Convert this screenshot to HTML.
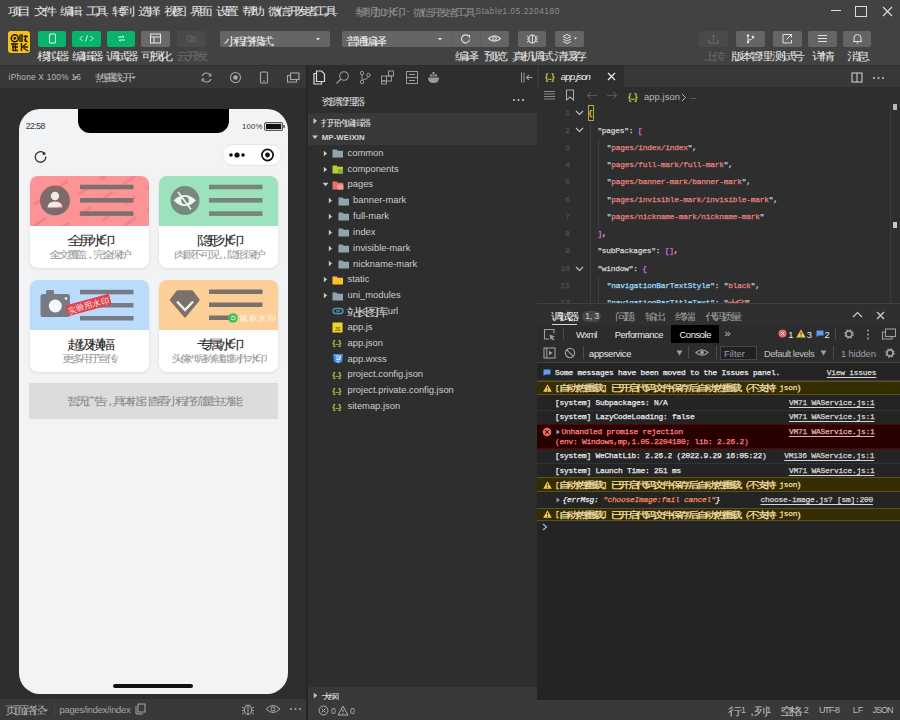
<!DOCTYPE html>
<html><head><meta charset="utf-8">
<style>
*{box-sizing:border-box;margin:0;padding:0}
html,body{width:900px;height:720px;overflow:hidden;background:#3a3a3a;font-family:"Liberation Sans",sans-serif;position:relative}
.a{position:absolute}
.t{position:absolute;white-space:nowrap;line-height:1}
.mono{font-family:"Liberation Mono",monospace;-webkit-text-stroke:.25px}
.c,.cm{font-family:"Liberation Sans",sans-serif;display:inline-block;width:.847em;text-align:center;font-style:normal;font-weight:normal;font-size:1.18em;letter-spacing:0;line-height:0;position:relative;top:.17em;transform:scaleX(1.28)}
.cm{width:.929em}
</style></head><body>
<div class="a" style="left:0px;top:0px;width:900px;height:65px;background:#424242;"></div>
<div class="a" style="left:0px;top:64.6px;width:900px;height:1px;background:#2e2e2e;"></div>
<div class="t " style="left:9.00px;top:6.63px;font-size:9.3px;color:#e4e4e4;;"><i class="c">项</i><i class="c">目</i></div>
<div class="t " style="left:35.00px;top:6.63px;font-size:9.3px;color:#e4e4e4;;"><i class="c">文</i><i class="c">件</i></div>
<div class="t " style="left:61.00px;top:6.63px;font-size:9.3px;color:#e4e4e4;;"><i class="c">编</i><i class="c">辑</i></div>
<div class="t " style="left:87.00px;top:6.63px;font-size:9.3px;color:#e4e4e4;;"><i class="c">工</i><i class="c">具</i></div>
<div class="t " style="left:113.00px;top:6.63px;font-size:9.3px;color:#e4e4e4;;"><i class="c">转</i><i class="c">到</i></div>
<div class="t " style="left:139.00px;top:6.63px;font-size:9.3px;color:#e4e4e4;;"><i class="c">选</i><i class="c">择</i></div>
<div class="t " style="left:165.00px;top:6.63px;font-size:9.3px;color:#e4e4e4;;"><i class="c">视</i><i class="c">图</i></div>
<div class="t " style="left:191.00px;top:6.63px;font-size:9.3px;color:#e4e4e4;;"><i class="c">界</i><i class="c">面</i></div>
<div class="t " style="left:217.00px;top:6.63px;font-size:9.3px;color:#e4e4e4;;"><i class="c">设</i><i class="c">置</i></div>
<div class="t " style="left:243.00px;top:6.63px;font-size:9.3px;color:#e4e4e4;;"><i class="c">帮</i><i class="c">助</i></div>
<div class="t " style="left:269.00px;top:6.63px;font-size:9.3px;color:#e4e4e4;;"><i class="c">微</i><i class="c">信</i><i class="c">开</i><i class="c">发</i><i class="c">者</i><i class="c">工</i><i class="c">具</i></div>
<div class="t " style="left:356.00px;top:6.71px;font-size:9.2px;color:#8e8e8e;;"><i class="c">黎</i><i class="c">明</i><i class="c">加</i><i class="c">水</i><i class="c">印</i></div>
<div class="t " style="left:406.50px;top:6.88px;font-size:9px;color:#8e8e8e;;">-</div>
<div class="t " style="left:413.50px;top:7.22px;font-size:8.6px;color:#8e8e8e;;"><i class="c">微</i><i class="c">信</i><i class="c">开</i><i class="c">发</i><i class="c">者</i><i class="c">工</i><i class="c">具</i></div>
<div class="t " style="left:475.50px;top:7.47px;font-size:8.3px;color:#8e8e8e;;letter-spacing:0.600px;">Stable</div>
<div class="t " style="left:502.50px;top:7.47px;font-size:8.3px;color:#8e8e8e;;letter-spacing:0.545px;">1.05.2204180</div>
<div class="a" style="left:831px;top:10px;width:10px;height:1px;background:#dcdcdc;"></div>
<div class="a" style="left:855px;top:6px;width:12px;height:11px;background:transparent;border:1.2px solid #dcdcdc"></div>
<svg class="a" style="left:882px;top:6px;" width="11" height="11" viewBox="0 0 11 11"><path d="M1 1L10 10M10 1L1 10" stroke="#dcdcdc" stroke-width="1.2"/></svg>
<div class="a" style="left:8px;top:31px;width:22px;height:22px;background:#f4c01e;border-radius:3px"></div>
<svg class="a" style="left:8px;top:31px;" width="22" height="22" viewBox="0 0 22 22"><circle cx="6.8" cy="7.2" r="3.5" fill="none" stroke="#2a2000" stroke-width="1.6"/><path d="M6.8 5.4L8.6 7.2L6.8 9L5 7.2Z" fill="#2a2000"/><path d="M12 3.5V11M14 3V11M15.5 5.5H20M17.5 4V11M16 8.5L19.5 11" fill="none" stroke="#2a2000" stroke-width="1.5"/><path d="M3 13H10M5 12V20M4 16H10M7.5 13.5V20M4.5 19.5H10" fill="none" stroke="#2a2000" stroke-width="1.5"/><path d="M13.5 12V20M13 16H20M18.5 12.5L15 15.5M15.5 17L20 20" fill="none" stroke="#2a2000" stroke-width="1.5"/></svg>
<div class="a" style="left:37.5px;top:31.3px;width:28.8px;height:15.4px;background:#07b56a;border-radius:2px"></div>
<div class="t" style="left:31.90px;top:51.63px;width:40px;text-align:center;font-size:9.3px;color:#e0e0e0;"><i class="c">模</i><i class="c">拟</i><i class="c">器</i></div>
<div class="a" style="left:72.2px;top:31.3px;width:28.8px;height:15.4px;background:#07b56a;border-radius:2px"></div>
<div class="t" style="left:66.60px;top:51.63px;width:40px;text-align:center;font-size:9.3px;color:#e0e0e0;"><i class="c">编</i><i class="c">辑</i><i class="c">器</i></div>
<div class="a" style="left:106.6px;top:31.3px;width:28.8px;height:15.4px;background:#07b56a;border-radius:2px"></div>
<div class="t" style="left:101.00px;top:51.63px;width:40px;text-align:center;font-size:9.3px;color:#e0e0e0;"><i class="c">调</i><i class="c">试</i><i class="c">器</i></div>
<div class="a" style="left:141.3px;top:31.3px;width:28.8px;height:15.4px;background:#6a6a6a;border-radius:2px"></div>
<div class="t" style="left:135.70px;top:51.63px;width:40px;text-align:center;font-size:9.3px;color:#e0e0e0;"><i class="c">可</i><i class="c">视</i><i class="c">化</i></div>
<div class="a" style="left:177px;top:31.3px;width:28.8px;height:15.4px;background:#4a4a4a;border-radius:2px"></div>
<div class="t" style="left:171.40px;top:51.63px;width:40px;text-align:center;font-size:9.3px;color:#6a6a6a;"><i class="c">云</i><i class="c">开</i><i class="c">发</i></div>
<svg class="a" style="left:37.5px;top:31.3px;" width="29" height="15" viewBox="0 0 29 15"><rect x="11.5" y="3" width="6" height="9" rx="1" fill="none" stroke="#e8f5ec" stroke-width="1.1"/></svg>
<svg class="a" style="left:72.2px;top:31.3px;" width="29" height="15" viewBox="0 0 29 15"><path d="M10.5 5L8 7.5L10.5 10M18.5 5L21 7.5L18.5 10M15.5 4.5L13.5 10.5" fill="none" stroke="#e8f5ec" stroke-width="1"/></svg>
<svg class="a" style="left:106.6px;top:31.3px;" width="29" height="15" viewBox="0 0 29 15"><path d="M11 6H17M15.5 4.5L17 6M18 9H12M13.5 10.5L12 9" fill="none" stroke="#e8f5ec" stroke-width="1"/></svg>
<svg class="a" style="left:141.3px;top:31.3px;" width="29" height="15" viewBox="0 0 29 15"><rect x="9.5" y="3" width="10" height="9" fill="none" stroke="#e6e6e6" stroke-width="1"/><path d="M9.5 6H19.5M13 6V12" stroke="#e6e6e6" stroke-width="1"/></svg>
<svg class="a" style="left:177px;top:31.3px;" width="29" height="15" viewBox="0 0 29 15"><circle cx="13" cy="7.5" r="3" fill="none" stroke="#666" stroke-width="1"/><circle cx="16.5" cy="8.5" r="2.5" fill="none" stroke="#666" stroke-width="1"/></svg>
<div class="a" style="left:220px;top:31.3px;width:109.5px;height:15.4px;background:#656565;border-radius:2px"></div>
<div class="t " style="left:224.50px;top:36.30px;font-size:9.1px;color:#e6e6e6;;"><i class="c">小</i><i class="c">程</i><i class="c">序</i><i class="c">模</i><i class="c">式</i></div>
<svg class="a" style="left:315px;top:36px;" width="6" height="6" viewBox="0 0 6 6"><path d="M1 2L5 2L3 4.5Z" fill="#e6e6e6"/></svg>
<div class="a" style="left:342px;top:31.3px;width:167px;height:15.4px;background:#656565;border-radius:2px"></div>
<div class="a" style="left:451px;top:31.3px;width:1px;height:15.4px;background:#5e5e5e;"></div>
<div class="a" style="left:480px;top:31.3px;width:1px;height:15.4px;background:#5e5e5e;"></div>
<div class="t " style="left:347.00px;top:36.30px;font-size:9.1px;color:#e6e6e6;;"><i class="c">普</i><i class="c">通</i><i class="c">编</i><i class="c">译</i></div>
<svg class="a" style="left:437px;top:36px;" width="6" height="6" viewBox="0 0 6 6"><path d="M1 2L5 2L3 4.5Z" fill="#e6e6e6"/></svg>
<svg class="a" style="left:451px;top:31.3px;" width="29" height="15" viewBox="0 0 29 15"><path d="M17.5 5.2A4 4 0 1 0 18.5 8.5" fill="none" stroke="#e0e0e0" stroke-width="1.1"/><path d="M16 4.5L18.5 4.5L18.5 7" fill="none" stroke="#e0e0e0" stroke-width="1.1"/></svg>
<svg class="a" style="left:480px;top:31.3px;" width="29" height="15" viewBox="0 0 29 15"><path d="M8.5 7.5Q14.5 2 20.5 7.5Q14.5 13 8.5 7.5Z" fill="none" stroke="#e0e0e0" stroke-width="1.1"/><circle cx="14.5" cy="7.5" r="1.8" fill="none" stroke="#e0e0e0" stroke-width="1.1"/></svg>
<div class="t" style="left:450.50px;top:51.63px;width:30px;text-align:center;font-size:9.3px;color:#e0e0e0;"><i class="c">编</i><i class="c">译</i></div>
<div class="t" style="left:479.50px;top:51.63px;width:30px;text-align:center;font-size:9.3px;color:#e0e0e0;"><i class="c">预</i><i class="c">览</i></div>
<div class="a" style="left:517.5px;top:31.3px;width:28.8px;height:15.4px;background:#656565;border-radius:2px"></div>
<svg class="a" style="left:517.5px;top:31.3px;" width="29" height="15" viewBox="0 0 29 15"><ellipse cx="14.4" cy="8" rx="3.5" ry="4" fill="none" stroke="#e0e0e0" stroke-width="1.1"/><path d="M9 5L11 6.5M19.8 5L17.8 6.5M9 8H11M17.8 8H19.8M9 11L11 10M19.8 11L17.8 10M14.4 4V12" stroke="#e0e0e0" stroke-width="1"/></svg>
<div class="t" style="left:509.90px;top:51.63px;width:44px;text-align:center;font-size:9.3px;color:#e0e0e0;"><i class="c">真</i><i class="c">机</i><i class="c">调</i><i class="c">试</i></div>
<div class="a" style="left:555px;top:31.3px;width:28.8px;height:15.4px;background:#656565;border-radius:2px"></div>
<svg class="a" style="left:555px;top:31.3px;" width="29" height="15" viewBox="0 0 29 15"><path d="M8 5.5L12 3.5L16 5.5L12 7.5Z M8 8L12 10L16 8 M8 10.5L12 12.5L16 10.5" fill="none" stroke="#e0e0e0" stroke-width="1"/><path d="M19 6.5L22 6.5L20.5 8.5Z" fill="#e0e0e0"/></svg>
<div class="t" style="left:549.40px;top:51.63px;width:40px;text-align:center;font-size:9.3px;color:#e0e0e0;"><i class="c">清</i><i class="c">缓</i><i class="c">存</i></div>
<div class="a" style="left:698.8px;top:31.3px;width:28.8px;height:15.4px;background:#4a4a4a;border-radius:2px"></div>
<div class="t" style="left:688.20px;top:51.63px;width:50px;text-align:center;font-size:9.3px;color:#666;"><i class="c">上</i><i class="c">传</i></div>
<div class="a" style="left:736px;top:31.3px;width:28.8px;height:15.4px;background:#656565;border-radius:2px"></div>
<div class="t" style="left:725.40px;top:51.63px;width:50px;text-align:center;font-size:9.3px;color:#e0e0e0;"><i class="c">版</i><i class="c">本</i><i class="c">管</i><i class="c">理</i></div>
<div class="a" style="left:773px;top:31.3px;width:28.8px;height:15.4px;background:#656565;border-radius:2px"></div>
<div class="t" style="left:762.40px;top:51.63px;width:50px;text-align:center;font-size:9.3px;color:#e0e0e0;"><i class="c">测</i><i class="c">试</i><i class="c">号</i></div>
<div class="a" style="left:807.8px;top:31.3px;width:28.8px;height:15.4px;background:#656565;border-radius:2px"></div>
<div class="t" style="left:797.20px;top:51.63px;width:50px;text-align:center;font-size:9.3px;color:#e0e0e0;"><i class="c">详</i><i class="c">情</i></div>
<div class="a" style="left:842.5px;top:31.3px;width:28.8px;height:15.4px;background:#656565;border-radius:2px"></div>
<div class="t" style="left:831.90px;top:51.63px;width:50px;text-align:center;font-size:9.3px;color:#e0e0e0;"><i class="c">消</i><i class="c">息</i></div>
<svg class="a" style="left:698.8px;top:31.3px;" width="29" height="15" viewBox="0 0 29 15"><path d="M10 9V12H19V9M14.5 10V4M12 6.5L14.5 4L17 6.5" fill="none" stroke="#6a6a6a" stroke-width="1"/></svg>
<svg class="a" style="left:736px;top:31.3px;" width="29" height="15" viewBox="0 0 29 15"><circle cx="12" cy="4.5" r="1.3" fill="#e0e0e0"/><circle cx="12" cy="11" r="1.3" fill="#e0e0e0"/><circle cx="17" cy="6" r="1.3" fill="#e0e0e0"/><path d="M12 5V10.5M12 9Q17 9 17 6" fill="none" stroke="#e0e0e0" stroke-width="1"/></svg>
<svg class="a" style="left:773px;top:31.3px;" width="29" height="15" viewBox="0 0 29 15"><path d="M16 3.5H10V12H18.5V9M13.5 8.5L18.5 3.5M15.5 3.5H18.5V6.5" fill="none" stroke="#e0e0e0" stroke-width="1"/></svg>
<svg class="a" style="left:807.8px;top:31.3px;" width="29" height="15" viewBox="0 0 29 15"><path d="M10 4.5H19M10 7.5H19M10 10.5H19" stroke="#e0e0e0" stroke-width="1.1"/></svg>
<svg class="a" style="left:842.5px;top:31.3px;" width="29" height="15" viewBox="0 0 29 15"><path d="M11 10.5V7Q11 3.5 14.5 3.5Q18 3.5 18 7V10.5H19H10M13.5 12H15.5" fill="none" stroke="#e0e0e0" stroke-width="1"/></svg>
<div class="a" style="left:0px;top:65.5px;width:306px;height:22.5px;background:#383838;"></div>
<div class="a" style="left:0px;top:88px;width:306px;height:611px;background:#2e2e2e;"></div>
<div class="a" style="left:0px;top:699px;width:306px;height:21px;background:#393939;"></div>
<div class="t " style="left:8.60px;top:73.47px;font-size:8.3px;color:#b8b8b8;;letter-spacing:0.233px;">iPhone X 100% 16</div>
<svg class="a" style="left:73px;top:75px;" width="6" height="6" viewBox="0 0 6 6"><path d="M0.5 1.5L5 1.5L2.75 4Z" fill="#b8b8b8"/></svg>
<div class="t " style="left:96.00px;top:73.64px;font-size:8.1px;color:#b8b8b8;;"><i class="c">热</i><i class="c">重</i><i class="c">载</i> <i class="c">开</i></div>
<svg class="a" style="left:131px;top:75px;" width="6" height="6" viewBox="0 0 6 6"><path d="M0.5 1.5L5 1.5L2.75 4Z" fill="#b8b8b8"/></svg>
<svg class="a" style="left:200px;top:71px;" width="13" height="13" viewBox="0 0 13 13"><path d="M10.5 4.5A4.5 4.5 0 0 0 2.2 5M2.5 8.5A4.5 4.5 0 0 0 10.8 8" fill="none" stroke="#a8a8a8" stroke-width="1.1"/><path d="M10.8 2.5V5H8.5M2.2 10.5V8H4.5" fill="none" stroke="#a8a8a8" stroke-width="1.1"/></svg>
<svg class="a" style="left:229px;top:71px;" width="13" height="13" viewBox="0 0 13 13"><circle cx="6.5" cy="6.5" r="5" fill="none" stroke="#a8a8a8" stroke-width="1.1"/><circle cx="6.5" cy="6.5" r="2.3" fill="#a8a8a8"/></svg>
<svg class="a" style="left:258px;top:71px;" width="12" height="13" viewBox="0 0 12 13"><rect x="2.5" y="1" width="7" height="11" rx="1" fill="none" stroke="#a8a8a8" stroke-width="1.1"/><path d="M5 10H7" stroke="#a8a8a8"/></svg>
<svg class="a" style="left:286px;top:71px;" width="14" height="13" viewBox="0 0 14 13"><rect x="4.5" y="2" width="8.5" height="6.5" fill="none" stroke="#a8a8a8" stroke-width="1.1"/><path d="M4.5 4.5H1.5V11H10.5V8.5" fill="none" stroke="#a8a8a8" stroke-width="1.1"/></svg>
<div class="a" style="left:19px;top:109px;width:269px;height:585px;background:#f2f3f5;border-radius:21px"></div>
<div class="a" style="left:78px;top:109px;width:151px;height:23.5px;background:#000;border-radius:0 0 12px 12px"></div>
<div class="t " style="left:25.70px;top:122.22px;font-size:8.6px;color:#333;;letter-spacing:-0.500px;">22:58</div>
<div class="t " style="left:242.00px;top:123.40px;font-size:7.8px;color:#333;;letter-spacing:0.167px;">100%</div>
<svg class="a" style="left:264px;top:122px;" width="22" height="9" viewBox="0 0 22 9"><rect x="0.6" y="0.6" width="18" height="7.8" rx="1.5" fill="none" stroke="#555" stroke-width="1.1"/><rect x="2" y="2" width="15.2" height="5" fill="#111"/><rect x="19.3" y="3" width="1.5" height="3" fill="#555"/></svg>
<svg class="a" style="left:33px;top:149px;" width="15" height="15" viewBox="0 0 15 15"><path d="M10.8 3.8A5.3 5.3 0 1 0 12.8 7.5" fill="none" stroke="#333" stroke-width="1.3"/><circle cx="11" cy="4.5" r="1.5" fill="#333"/></svg>
<div class="a" style="left:222px;top:144px;width:60px;height:22px;background:#fdfdfd;border-radius:11px;border:0.6px solid #e6e6e6"></div>
<svg class="a" style="left:222px;top:144px;" width="60" height="22" viewBox="0 0 60 22"><circle cx="9" cy="11" r="1.8" fill="#111"/><circle cx="15" cy="11" r="2.6" fill="#111"/><circle cx="21" cy="11" r="1.8" fill="#111"/><circle cx="45.5" cy="11" r="5.6" fill="none" stroke="#111" stroke-width="1.7"/><circle cx="45.5" cy="11" r="2.4" fill="#111"/></svg>
<div class="a" style="left:30px;top:176px;width:119px;height:92px;background:#ffffff;border-radius:8px;box-shadow:0 1px 3px rgba(0,0,0,.10)"></div>
<div class="a" style="left:30px;top:176px;width:119px;height:50px;background:#fc9495;border-radius:8px 8px 0 0"></div>
<div class="t" style="left:34.50px;top:234.23px;width:110px;text-align:center;font-size:10.6px;color:#333;"><i class="c">全</i><i class="c">屏</i><i class="c">水</i><i class="c">印</i></div>
<div class="t" style="left:31.50px;top:249.25px;width:116px;text-align:center;font-size:8.8px;color:#999;"><i class="c">全</i><i class="c">文</i><i class="c">覆</i><i class="c">盖</i><i class="c">，</i><i class="c">完</i><i class="c">全</i><i class="c">保</i><i class="c">护</i></div>
<div class="a" style="left:159.3px;top:176px;width:119px;height:92px;background:#ffffff;border-radius:8px;box-shadow:0 1px 3px rgba(0,0,0,.10)"></div>
<div class="a" style="left:159.3px;top:176px;width:119px;height:50px;background:#9ce2bd;border-radius:8px 8px 0 0"></div>
<div class="t" style="left:163.80px;top:234.23px;width:110px;text-align:center;font-size:10.6px;color:#333;"><i class="c">隐</i><i class="c">形</i><i class="c">水</i><i class="c">印</i></div>
<div class="t" style="left:160.80px;top:249.25px;width:116px;text-align:center;font-size:8.8px;color:#999;"><i class="c">肉</i><i class="c">眼</i><i class="c">不</i><i class="c">可</i><i class="c">见</i><i class="c">，</i><i class="c">隐</i><i class="c">形</i><i class="c">保</i><i class="c">护</i></div>
<div class="a" style="left:30px;top:280px;width:119px;height:92px;background:#ffffff;border-radius:8px;box-shadow:0 1px 3px rgba(0,0,0,.10)"></div>
<div class="a" style="left:30px;top:280px;width:119px;height:50px;background:#badbfc;border-radius:8px 8px 0 0"></div>
<div class="t" style="left:34.50px;top:338.23px;width:110px;text-align:center;font-size:10.6px;color:#333;"><i class="c">超</i><i class="c">级</i><i class="c">横</i><i class="c">幅</i></div>
<div class="t" style="left:31.50px;top:353.25px;width:116px;text-align:center;font-size:8.8px;color:#999;"><i class="c">更</i><i class="c">多</i><i class="c">用</i><i class="c">于</i><i class="c">宣</i><i class="c">传</i></div>
<div class="a" style="left:159.3px;top:280px;width:119px;height:92px;background:#ffffff;border-radius:8px;box-shadow:0 1px 3px rgba(0,0,0,.10)"></div>
<div class="a" style="left:159.3px;top:280px;width:119px;height:50px;background:#fccf98;border-radius:8px 8px 0 0"></div>
<div class="t" style="left:163.80px;top:338.23px;width:110px;text-align:center;font-size:10.6px;color:#333;"><i class="c">专</i><i class="c">属</i><i class="c">水</i><i class="c">印</i></div>
<div class="t" style="left:160.80px;top:353.25px;width:116px;text-align:center;font-size:8.8px;color:#999;"><i class="c">头</i><i class="c">像</i>+<i class="c">昵</i><i class="c">称</i><i class="c">就</i><i class="c">能</i><i class="c">制</i><i class="c">作</i><i class="c">水</i><i class="c">印</i></div>
<svg class="a" style="left:30px;top:176px;" width="119" height="50" viewBox="0 0 119 50"><circle cx="25" cy="24.5" r="15" fill="#7b6b6b"/><circle cx="25" cy="20" r="4.2" fill="#f7e8e6"/><path d="M17.5 31.5Q18 25.5 25 25.5Q32 25.5 32.5 31.5Z" fill="#f7e8e6"/><rect x="50" y="8.7" width="53.5" height="4.6" fill="#7c706e"/><rect x="50" y="22" width="53.5" height="4.6" fill="#7c706e"/><rect x="50" y="35.3" width="53.5" height="4.6" fill="#7c706e"/><g stroke="#d9545c" stroke-width="3" opacity=".26" stroke-dasharray="14 13"><path d="M-40 60L45 0" stroke-dashoffset="0"/><path d="M-10 60L75 0" stroke-dashoffset="9"/><path d="M20 60L105 0" stroke-dashoffset="18"/><path d="M50 60L135 0" stroke-dashoffset="27"/><path d="M80 60L165 0" stroke-dashoffset="36"/><path d="M110 60L195 0" stroke-dashoffset="45"/><path d="M140 60L225 0" stroke-dashoffset="54"/></g></svg>
<svg class="a" style="left:159.3px;top:176px;" width="119" height="50" viewBox="0 0 119 50"><circle cx="26" cy="24.5" r="14.5" fill="#788a7e"/><path d="M14.5 24.5Q26 13.5 37 24.5Q26 35.5 14.5 24.5Z" fill="#eef7f1"/><circle cx="26" cy="24.5" r="3.8" fill="#788a7e"/><path d="M19 16L32 33.5" stroke="#eef7f1" stroke-width="1.6"/><rect x="50" y="8.7" width="53.5" height="4.6" fill="#78847c"/><rect x="50" y="22" width="53.5" height="4.6" fill="#78847c"/><rect x="50" y="35.3" width="53.5" height="4.6" fill="#78847c"/></svg>
<svg class="a" style="left:30px;top:280px;" width="119" height="50" viewBox="0 0 119 50"><rect x="10.5" y="14" width="29.5" height="23" rx="2.5" fill="#777c84"/><rect x="16" y="10" width="8" height="5" rx="1.5" fill="#777c84"/><circle cx="25.3" cy="26" r="6.5" fill="#f4f8fd"/><circle cx="36" cy="18.5" r="1.3" fill="#f4f8fd"/><rect x="50" y="9.8" width="53.5" height="4.5" fill="#777c84"/><rect x="50" y="23" width="53.5" height="4.5" fill="#777c84"/><rect x="50" y="36" width="53.5" height="4.5" fill="#777c84"/><g transform="rotate(-15 58.5 25)"><rect x="36" y="19.5" width="45" height="11" fill="#e0444a"/><text x="58.5" y="28.3" font-size="8.2" font-family="Liberation Sans" fill="#fbe6e6" text-anchor="middle" letter-spacing="0.5">实验用水印</text></g></svg>
<svg class="a" style="left:159.3px;top:280px;" width="119" height="50" viewBox="0 0 119 50"><path d="M18.5 11.5H33L39.5 20L26 36.3L12 20Z" fill="#7a716a" stroke="#7a716a" stroke-width="2.4" stroke-linejoin="round"/><path d="M18 21.5L26 30L34 21.5" fill="none" stroke="#fdf3e6" stroke-width="2.3"/><rect x="50" y="9.5" width="53.5" height="4.5" fill="#7a716a"/><rect x="50" y="22.5" width="53.5" height="4.5" fill="#7a716a"/><rect x="50" y="35.5" width="28" height="4.5" fill="#7a716a"/><circle cx="74" cy="38" r="4.8" fill="#3fc05a"/><path d="M72 37.5Q74 35 76.5 37.5M72 39Q74 41 76.5 38.5" stroke="#fff" stroke-width=".9" fill="none"/><text x="81" y="41" font-size="8" font-family="Liberation Sans" fill="#fff" opacity=".9" letter-spacing="1.2">昵称水印</text></svg>
<div class="a" style="left:29.3px;top:383px;width:249px;height:36px;background:#dcdcdc;"></div>
<div class="t" style="left:33.80px;top:396.58px;width:240px;text-align:center;font-size:9px;color:#8c8c8c;"><i class="c">暂</i><i class="c">无</i><i class="c">广</i><i class="c">告</i><i class="c">，</i><i class="c">具</i><i class="c">体</i><i class="c">指</i><i class="c">引</i><i class="c">查</i><i class="c">看</i><i class="c">小</i><i class="c">程</i><i class="c">序</i><i class="c">流</i><i class="c">量</i><i class="c">主</i><i class="c">功</i><i class="c">能</i></div>
<div class="a" style="left:113px;top:683.5px;width:80px;height:4px;background:#111;border-radius:2px"></div>
<div class="t " style="left:5.50px;top:705.63px;font-size:9.3px;color:#a8a8a8;;"><i class="c">页</i><i class="c">面</i><i class="c">路</i><i class="c">径</i></div>
<svg class="a" style="left:43px;top:708px;" width="6" height="6" viewBox="0 0 6 6"><path d="M0.5 1.5L5 1.5L2.75 4Z" fill="#a8a8a8"/></svg>
<div class="a" style="left:54px;top:703px;width:1px;height:14px;background:#464646;"></div>
<div class="t " style="left:59.60px;top:705.63px;font-size:9.3px;color:#a8a8a8;;letter-spacing:-0.250px;">pages/index/index</div>
<svg class="a" style="left:135px;top:703px;" width="11" height="12" viewBox="0 0 11 12"><rect x="3" y="1" width="7" height="8" fill="none" stroke="#a8a8a8" stroke-width="1"/><path d="M1 3V11H8" fill="none" stroke="#a8a8a8" stroke-width="1"/></svg>
<svg class="a" style="left:240px;top:702px;" width="16" height="14" viewBox="0 0 16 14"><ellipse cx="8" cy="8" rx="3.5" ry="4.5" fill="none" stroke="#a8a8a8" stroke-width="1"/><path d="M2 5L4.5 6.5M14 5L11.5 6.5M2 8.5H4.5M11.5 8.5H14M2 12L4.5 10.5M14 12L11.5 10.5M8 3.5V12.5M6 2.5L7 4M10 2.5L9 4" stroke="#a8a8a8" stroke-width="1"/></svg>
<svg class="a" style="left:265px;top:703px;" width="16" height="12" viewBox="0 0 16 12"><path d="M1 6Q8 -1 15 6Q8 13 1 6Z" fill="none" stroke="#a8a8a8" stroke-width="1"/><circle cx="8" cy="6" r="2" fill="none" stroke="#a8a8a8" stroke-width="1"/></svg>
<svg class="a" style="left:289px;top:707px;" width="13" height="4" viewBox="0 0 13 4"><circle cx="2" cy="2" r="1" fill="#a8a8a8"/><circle cx="6.5" cy="2" r="1" fill="#a8a8a8"/><circle cx="11" cy="2" r="1" fill="#a8a8a8"/></svg>
<div class="a" style="left:306px;top:65.5px;width:1.6px;height:654.5px;background:#262626;"></div>
<div class="a" style="left:307.6px;top:65.5px;width:229.4px;height:633.5px;background:#2e2e2e;"></div>
<svg class="a" style="left:311px;top:69px;" width="16" height="17" viewBox="0 0 16 17"><path d="M5.5 4.5H3V15H10.5V12.5" fill="none" stroke="#d8d8d8" stroke-width="1.2"/><path d="M5.5 2H10.5L13.5 5V12.5H5.5Z" fill="none" stroke="#d8d8d8" stroke-width="1.2"/></svg>
<svg class="a" style="left:335px;top:70px;" width="15" height="15" viewBox="0 0 15 15"><circle cx="9" cy="6" r="4.3" fill="none" stroke="#9a9a9a" stroke-width="1.1"/><path d="M6 9L1.5 13.5" stroke="#9a9a9a" stroke-width="1.3"/></svg>
<svg class="a" style="left:358px;top:70px;" width="14" height="15" viewBox="0 0 14 15"><circle cx="4" cy="3" r="1.7" fill="none" stroke="#9a9a9a" stroke-width="1"/><circle cx="4" cy="12" r="1.7" fill="none" stroke="#9a9a9a" stroke-width="1"/><circle cx="10.5" cy="5" r="1.7" fill="none" stroke="#9a9a9a" stroke-width="1"/><path d="M4 4.7V10.3M10.5 6.7Q10.5 9 4.5 10" fill="none" stroke="#9a9a9a" stroke-width="1"/></svg>
<svg class="a" style="left:380px;top:70px;" width="15" height="15" viewBox="0 0 15 15"><rect x="1.5" y="6" width="5" height="5" fill="none" stroke="#9a9a9a" stroke-width="1"/><rect x="6.5" y="6" width="5" height="5" fill="none" stroke="#9a9a9a" stroke-width="1"/><rect x="1.5" y="11" width="5" height="3" fill="none" stroke="#9a9a9a" stroke-width="1"/><rect x="8.5" y="1" width="5" height="5" fill="none" stroke="#9a9a9a" stroke-width="1"/></svg>
<svg class="a" style="left:405px;top:70px;" width="14" height="15" viewBox="0 0 14 15"><rect x="1.5" y="1.5" width="11" height="12" fill="none" stroke="#9a9a9a" stroke-width="1"/><path d="M1.5 7.5H12.5M4 4.5H10M4 10.5H10" stroke="#9a9a9a" stroke-width="1"/></svg>
<svg class="a" style="left:427px;top:71px;" width="14" height="13" viewBox="0 0 14 13"><path d="M1 6.5H12Q12 12 6.5 12Q1 12 1 6.5Z" fill="#9a9a9a"/><rect x="3" y="3.5" width="2" height="2" fill="#9a9a9a"/><rect x="5.5" y="3.5" width="2" height="2" fill="#9a9a9a"/><rect x="8" y="3.5" width="2" height="2" fill="#9a9a9a"/><rect x="5.5" y="1" width="2" height="2" fill="#9a9a9a"/></svg>
<svg class="a" style="left:519px;top:71px;" width="15" height="13" viewBox="0 0 15 13"><path d="M2.5 1.5V11.5M5 1.5V11.5" stroke="#9a9a9a" stroke-width="1"/><path d="M13.5 6.5H7.5M10 4L7.5 6.5L10 9" fill="none" stroke="#9a9a9a" stroke-width="1.1"/></svg>
<div class="t " style="left:321.50px;top:97.64px;font-size:8.1px;color:#d4d4d4;;"><i class="c">资</i><i class="c">源</i><i class="c">管</i><i class="c">理</i><i class="c">器</i></div>
<svg class="a" style="left:512px;top:98px;" width="14" height="4" viewBox="0 0 14 4"><circle cx="2" cy="2" r="1" fill="#cfcfcf"/><circle cx="6.5" cy="2" r="1" fill="#cfcfcf"/><circle cx="11" cy="2" r="1" fill="#cfcfcf"/></svg>
<div class="a" style="left:307.6px;top:112.8px;width:229.4px;height:32.2px;background:#393939;"></div>
<svg class="a" style="left:312px;top:117px;" width="6" height="8" viewBox="0 0 6 8"><path d="M1.5 1L5 4L1.5 7Z" fill="#c8c8c8"/></svg>
<div class="t " style="left:321.50px;top:118.23px;font-size:8px;color:#d4d4d4;font-weight:bold;"><i class="c">打</i><i class="c">开</i><i class="c">的</i><i class="c">编</i><i class="c">辑</i><i class="c">器</i></div>
<svg class="a" style="left:311px;top:134px;" width="8" height="6" viewBox="0 0 8 6"><path d="M1 1.5H7L4 5Z" fill="#c8c8c8"/></svg>
<div class="t " style="left:321.70px;top:134.00px;font-size:7.8px;color:#d4d4d4;font-weight:bold;letter-spacing:0.125px;">MP-WEIXIN</div>
<svg class="a" style="left:322.8px;top:149.7px;" width="5" height="7" viewBox="0 0 5 7"><path d="M0.8 0.8L4.2 3.5L0.8 6.2Z" fill="#c8c8c8"/></svg>
<svg class="a" style="left:332px;top:148.2px;" width="12" height="10" viewBox="0 0 12 10"><path d="M0.5 1.5H4.5L5.8 2.8H11V9.5H0.5Z" fill="#90a4ae"/></svg>
<div class="t " style="left:347.50px;top:147.84px;font-size:9.4px;color:#cccccc;;">common</div>
<svg class="a" style="left:322.8px;top:165.51999999999998px;" width="5" height="7" viewBox="0 0 5 7"><path d="M0.8 0.8L4.2 3.5L0.8 6.2Z" fill="#c8c8c8"/></svg>
<svg class="a" style="left:332px;top:164.01999999999998px;" width="12" height="10" viewBox="0 0 12 10"><path d="M0.5 1.5H4.5L5.8 2.8H11V9.5H0.5Z" fill="#c0ca33"/><rect x="6" y="5" width="5" height="4.5" fill="#7cb342"/></svg>
<div class="t " style="left:347.50px;top:163.66px;font-size:9.4px;color:#cccccc;;">components</div>
<svg class="a" style="left:321.6px;top:182.33999999999997px;" width="7" height="5" viewBox="0 0 7 5"><path d="M0.5 0.8H6.5L3.5 4.2Z" fill="#c8c8c8"/></svg>
<svg class="a" style="left:332px;top:179.83999999999997px;" width="12" height="10" viewBox="0 0 12 10"><path d="M0.5 1.5H4.5L5.8 2.8H11V9.5H0.5Z" fill="#e57368"/><rect x="5.5" y="4.5" width="6" height="5" fill="#f4a190"/></svg>
<div class="t " style="left:347.50px;top:179.48px;font-size:9.4px;color:#cccccc;;">pages</div>
<svg class="a" style="left:328.40000000000003px;top:197.16px;" width="5" height="7" viewBox="0 0 5 7"><path d="M0.8 0.8L4.2 3.5L0.8 6.2Z" fill="#c8c8c8"/></svg>
<svg class="a" style="left:337.6px;top:195.66px;" width="12" height="10" viewBox="0 0 12 10"><path d="M0.5 1.5H4.5L5.8 2.8H11V9.5H0.5Z" fill="#90a4ae"/></svg>
<div class="t " style="left:353.10px;top:195.30px;font-size:9.4px;color:#cccccc;;">banner-mark</div>
<svg class="a" style="left:328.40000000000003px;top:212.98px;" width="5" height="7" viewBox="0 0 5 7"><path d="M0.8 0.8L4.2 3.5L0.8 6.2Z" fill="#c8c8c8"/></svg>
<svg class="a" style="left:337.6px;top:211.48px;" width="12" height="10" viewBox="0 0 12 10"><path d="M0.5 1.5H4.5L5.8 2.8H11V9.5H0.5Z" fill="#90a4ae"/></svg>
<div class="t " style="left:353.10px;top:211.12px;font-size:9.4px;color:#cccccc;;">full-mark</div>
<svg class="a" style="left:328.40000000000003px;top:228.79999999999998px;" width="5" height="7" viewBox="0 0 5 7"><path d="M0.8 0.8L4.2 3.5L0.8 6.2Z" fill="#c8c8c8"/></svg>
<svg class="a" style="left:337.6px;top:227.29999999999998px;" width="12" height="10" viewBox="0 0 12 10"><path d="M0.5 1.5H4.5L5.8 2.8H11V9.5H0.5Z" fill="#90a4ae"/></svg>
<div class="t " style="left:353.10px;top:226.94px;font-size:9.4px;color:#cccccc;;">index</div>
<svg class="a" style="left:328.40000000000003px;top:244.62px;" width="5" height="7" viewBox="0 0 5 7"><path d="M0.8 0.8L4.2 3.5L0.8 6.2Z" fill="#c8c8c8"/></svg>
<svg class="a" style="left:337.6px;top:243.12px;" width="12" height="10" viewBox="0 0 12 10"><path d="M0.5 1.5H4.5L5.8 2.8H11V9.5H0.5Z" fill="#90a4ae"/></svg>
<div class="t " style="left:353.10px;top:242.76px;font-size:9.4px;color:#cccccc;;">invisible-mark</div>
<svg class="a" style="left:328.40000000000003px;top:260.44px;" width="5" height="7" viewBox="0 0 5 7"><path d="M0.8 0.8L4.2 3.5L0.8 6.2Z" fill="#c8c8c8"/></svg>
<svg class="a" style="left:337.6px;top:258.94px;" width="12" height="10" viewBox="0 0 12 10"><path d="M0.5 1.5H4.5L5.8 2.8H11V9.5H0.5Z" fill="#90a4ae"/></svg>
<div class="t " style="left:353.10px;top:258.58px;font-size:9.4px;color:#cccccc;;">nickname-mark</div>
<svg class="a" style="left:322.8px;top:276.26px;" width="5" height="7" viewBox="0 0 5 7"><path d="M0.8 0.8L4.2 3.5L0.8 6.2Z" fill="#c8c8c8"/></svg>
<svg class="a" style="left:332px;top:274.76px;" width="12" height="10" viewBox="0 0 12 10"><path d="M0.5 1.5H4.5L5.8 2.8H11V9.5H0.5Z" fill="#fbc02d"/></svg>
<div class="t " style="left:347.50px;top:274.40px;font-size:9.4px;color:#cccccc;;">static</div>
<svg class="a" style="left:322.8px;top:292.08px;" width="5" height="7" viewBox="0 0 5 7"><path d="M0.8 0.8L4.2 3.5L0.8 6.2Z" fill="#c8c8c8"/></svg>
<svg class="a" style="left:332px;top:290.58px;" width="12" height="10" viewBox="0 0 12 10"><path d="M0.5 1.5H4.5L5.8 2.8H11V9.5H0.5Z" fill="#90a4ae"/></svg>
<div class="t " style="left:347.50px;top:290.22px;font-size:9.4px;color:#cccccc;;">uni_modules</div>
<svg class="a" style="left:332px;top:306.4px;" width="12" height="10" viewBox="0 0 12 10"><rect x="1" y="2.5" width="10" height="5" rx="2.5" fill="none" stroke="#519aba" stroke-width="1.3"/><path d="M4 5H8" stroke="#519aba" stroke-width="1.2"/></svg>
<div class="t " style="left:347.50px;top:306.04px;font-size:9.4px;color:#cccccc;;"><i class="c">站</i><i class="c">长</i><i class="c">图</i><i class="c">库</i>.url</div>
<svg class="a" style="left:332px;top:321.72px;" width="11" height="11" viewBox="0 0 11 11"><rect x="0.5" y="0.5" width="10" height="10" fill="#f1d629"/><text x="5.5" y="9" font-size="5" font-family="Liberation Sans" fill="#333" text-anchor="middle">JS</text></svg>
<div class="t " style="left:347.50px;top:321.86px;font-size:9.4px;color:#cccccc;;">app.js</div>
<div class="t " style="left:332.30px;top:339.27px;font-size:8px;color:#cbcb41;font-weight:bold;letter-spacing:-.5px;">{..}</div>
<div class="t " style="left:347.50px;top:337.68px;font-size:9.4px;color:#cccccc;;">app.json</div>
<svg class="a" style="left:332px;top:353.36px;" width="12" height="11" viewBox="0 0 12 11"><path d="M1 1H11L10 9L6 10.5L2 9Z" fill="#3f8fe0"/><path d="M3.5 3H8.5L8.2 6.5H4.2M4.2 5H8.2M4.5 8L6 8.5L7.8 8" fill="none" stroke="#fff" stroke-width=".8"/></svg>
<div class="t " style="left:347.50px;top:353.50px;font-size:9.4px;color:#cccccc;;">app.wxss</div>
<div class="t " style="left:332.30px;top:370.91px;font-size:8px;color:#cbcb41;font-weight:bold;letter-spacing:-.5px;">{..}</div>
<div class="t " style="left:347.50px;top:369.32px;font-size:9.4px;color:#cccccc;;">project.config.json</div>
<div class="t " style="left:332.30px;top:386.73px;font-size:8px;color:#cbcb41;font-weight:bold;letter-spacing:-.5px;">{..}</div>
<div class="t " style="left:347.50px;top:385.14px;font-size:9.4px;color:#cccccc;;">project.private.config.json</div>
<div class="t " style="left:332.30px;top:402.55px;font-size:8px;color:#cbcb41;font-weight:bold;letter-spacing:-.5px;">{..}</div>
<div class="t " style="left:347.50px;top:400.96px;font-size:9.4px;color:#cccccc;;">sitemap.json</div>
<div class="a" style="left:307.6px;top:687px;width:229.4px;height:13px;background:#383838;"></div>
<svg class="a" style="left:313px;top:692.0px;" width="5" height="7" viewBox="0 0 5 7"><path d="M0.8 0.8L4.2 3.5L0.8 6.2Z" fill="#d0d0d0"/></svg>
<div class="t " style="left:321.70px;top:692.40px;font-size:7.8px;color:#dcdcdc;font-weight:bold;"><i class="c">大</i><i class="c">纲</i></div>
<div class="a" style="left:307.6px;top:699.5px;width:592.4px;height:20.5px;background:#393939;"></div>
<svg class="a" style="left:318px;top:705px;" width="11" height="11" viewBox="0 0 11 11"><circle cx="5.5" cy="5.5" r="4.5" fill="none" stroke="#b0b0b0" stroke-width="1"/><path d="M3.5 3.5L7.5 7.5M7.5 3.5L3.5 7.5" stroke="#b0b0b0" stroke-width="1"/></svg>
<div class="t " style="left:331.00px;top:706.55px;font-size:8.8px;color:#b0b0b0;;">0</div>
<svg class="a" style="left:337px;top:705px;" width="12" height="11" viewBox="0 0 12 11"><path d="M6 1.2L11 10H1Z" fill="none" stroke="#b0b0b0" stroke-width="1"/><path d="M6 4.5V7.2M6 8.2V9" stroke="#b0b0b0" stroke-width="1"/></svg>
<div class="t " style="left:350.00px;top:706.55px;font-size:8.8px;color:#b0b0b0;;">0</div>
<div class="t " style="left:729.40px;top:706.38px;font-size:9px;color:#b8b8b8;;"><i class="c">行</i> 1<i class="c">，</i><i class="c">列</i> 1</div>
<div class="t " style="left:780.80px;top:706.38px;font-size:9px;color:#b8b8b8;;"><i class="c">空</i><i class="c">格</i>: 2</div>
<div class="t " style="left:819.00px;top:706.38px;font-size:9px;color:#b8b8b8;;letter-spacing:-1.125px;">UTF-8</div>
<div class="t " style="left:852.80px;top:706.38px;font-size:9px;color:#b8b8b8;;">LF</div>
<div class="t " style="left:872.50px;top:706.38px;font-size:9px;color:#b8b8b8;;letter-spacing:-1.000px;">JSON</div>
<div class="a" style="left:537px;top:65.5px;width:363px;height:237.5px;background:#2e2e2e;"></div>
<div class="a" style="left:537px;top:65.5px;width:363px;height:21px;background:#383838;"></div>
<div class="a" style="left:539px;top:65.5px;width:84.5px;height:21px;background:#2e2e2e;"></div>
<div class="t " style="left:545.00px;top:72.72px;font-size:8.6px;color:#cbcb41;font-weight:bold;letter-spacing:-.6px;">{..}</div>
<div class="t " style="left:560.70px;top:71.87px;font-size:9.6px;color:#f0f0f0;font-style:italic;letter-spacing:-0.857px;">app.json</div>
<svg class="a" style="left:607px;top:72px;" width="9" height="9" viewBox="0 0 9 9"><path d="M1 1L8 8M8 1L1 8" stroke="#e8e8e8" stroke-width="1.3"/></svg>
<svg class="a" style="left:851px;top:72px;" width="12" height="11" viewBox="0 0 12 11"><rect x="1" y="1" width="10" height="9" fill="none" stroke="#c8c8c8" stroke-width="1.1"/><path d="M6 1V10" stroke="#c8c8c8" stroke-width="1.1"/></svg>
<svg class="a" style="left:872px;top:76px;" width="13" height="4" viewBox="0 0 13 4"><circle cx="2" cy="2" r="1" fill="#c8c8c8"/><circle cx="6.5" cy="2" r="1" fill="#c8c8c8"/><circle cx="11" cy="2" r="1" fill="#c8c8c8"/></svg>
<svg class="a" style="left:543px;top:90px;" width="13" height="11" viewBox="0 0 13 11"><path d="M1 1.5H12M1 4H12M1 6.5H12M1 9H12" stroke="#8a8a8a" stroke-width="1"/></svg>
<svg class="a" style="left:565px;top:89px;" width="10" height="12" viewBox="0 0 10 12"><path d="M1.5 1H8.5V11L5 8L1.5 11Z" fill="none" stroke="#a8a8a8" stroke-width="1.1"/></svg>
<svg class="a" style="left:586px;top:91px;" width="12" height="9" viewBox="0 0 12 9"><path d="M11 4.5H1.5M5 1L1.5 4.5L5 8" fill="none" stroke="#555" stroke-width="1.1"/></svg>
<svg class="a" style="left:606px;top:91px;" width="12" height="9" viewBox="0 0 12 9"><path d="M1 4.5H10.5M7 1L10.5 4.5L7 8" fill="none" stroke="#555" stroke-width="1.1"/></svg>
<div class="t " style="left:628.00px;top:92.72px;font-size:8.6px;color:#cbcb41;font-weight:bold;letter-spacing:-.6px;">{..}</div>
<div class="t " style="left:644.00px;top:92.04px;font-size:9.4px;color:#b8b8b8;;letter-spacing:0.071px;">app.json</div>
<svg class="a" style="left:681px;top:93px;" width="6" height="9" viewBox="0 0 6 9"><path d="M1 1L4.5 4.5L1 8" fill="none" stroke="#b8b8b8" stroke-width="1"/></svg>
<div class="t " style="left:690.00px;top:93.23px;font-size:8px;color:#b8b8b8;;">...</div>
<div class="a" style="left:588px;top:104.5px;width:5.6px;height:16.5px;background:transparent;border:1px solid #b8a83a"></div>
<div class="t mono" style="left:555.00px;top:109.28px;font-size:7.85px;color:#505050;width:15px;text-align:right;">1</div>
<div class="t mono" style="left:587.90px;top:109.28px;font-size:7.85px;letter-spacing:-.21px"><span style="color:#e8c547">{</span></div>
<svg class="a" style="left:575px;top:110.2px;" width="9" height="6" viewBox="0 0 9 6"><path d="M1 1L4.5 4.5L8 1" fill="none" stroke="#c5c5c5" stroke-width="1.1"/></svg>
<div class="t mono" style="left:555.00px;top:126.55px;font-size:7.85px;color:#505050;width:15px;text-align:right;">2</div>
<div class="t mono" style="left:597.38px;top:126.55px;font-size:7.85px;letter-spacing:-.21px"><span style="color:#d4d4d4">"pages"</span><span style="color:#d4d4d4">: </span><span style="color:#da70d6">[</span></div>
<svg class="a" style="left:575px;top:127.47px;" width="9" height="6" viewBox="0 0 9 6"><path d="M1 1L4.5 4.5L8 1" fill="none" stroke="#c5c5c5" stroke-width="1.1"/></svg>
<div class="t mono" style="left:555.00px;top:143.82px;font-size:7.85px;color:#505050;width:15px;text-align:right;">3</div>
<div class="t mono" style="left:606.86px;top:143.82px;font-size:7.85px;letter-spacing:-.21px"><span style="color:#a8d8e8">"</span><span style="color:#e6837c">pages/index/index</span><span style="color:#a8d8e8">"</span><span style="color:#d4d4d4">,</span></div>
<div class="t mono" style="left:555.00px;top:161.09px;font-size:7.85px;color:#505050;width:15px;text-align:right;">4</div>
<div class="t mono" style="left:606.86px;top:161.09px;font-size:7.85px;letter-spacing:-.21px"><span style="color:#a8d8e8">"</span><span style="color:#e6837c">pages/full-mark/full-mark</span><span style="color:#a8d8e8">"</span><span style="color:#d4d4d4">,</span></div>
<div class="t mono" style="left:555.00px;top:178.36px;font-size:7.85px;color:#505050;width:15px;text-align:right;">5</div>
<div class="t mono" style="left:606.86px;top:178.36px;font-size:7.85px;letter-spacing:-.21px"><span style="color:#a8d8e8">"</span><span style="color:#e6837c">pages/banner-mark/banner-mark</span><span style="color:#a8d8e8">"</span><span style="color:#d4d4d4">,</span></div>
<div class="t mono" style="left:555.00px;top:195.63px;font-size:7.85px;color:#505050;width:15px;text-align:right;">6</div>
<div class="t mono" style="left:606.86px;top:195.63px;font-size:7.85px;letter-spacing:-.21px"><span style="color:#a8d8e8">"</span><span style="color:#e6837c">pages/invisible-mark/invisible-mark</span><span style="color:#a8d8e8">"</span><span style="color:#d4d4d4">,</span></div>
<div class="t mono" style="left:555.00px;top:212.90px;font-size:7.85px;color:#505050;width:15px;text-align:right;">7</div>
<div class="t mono" style="left:606.86px;top:212.90px;font-size:7.85px;letter-spacing:-.21px"><span style="color:#a8d8e8">"</span><span style="color:#e6837c">pages/nickname-mark/nickname-mark</span><span style="color:#a8d8e8">"</span></div>
<div class="t mono" style="left:555.00px;top:230.17px;font-size:7.85px;color:#505050;width:15px;text-align:right;">8</div>
<div class="t mono" style="left:597.38px;top:230.17px;font-size:7.85px;letter-spacing:-.21px"><span style="color:#da70d6">]</span><span style="color:#d4d4d4">,</span></div>
<div class="t mono" style="left:555.00px;top:247.44px;font-size:7.85px;color:#505050;width:15px;text-align:right;">9</div>
<div class="t mono" style="left:597.38px;top:247.44px;font-size:7.85px;letter-spacing:-.21px"><span style="color:#d4d4d4">"subPackages"</span><span style="color:#d4d4d4">: </span><span style="color:#da70d6">[]</span><span style="color:#d4d4d4">,</span></div>
<div class="t mono" style="left:555.00px;top:264.71px;font-size:7.85px;color:#505050;width:15px;text-align:right;">10</div>
<div class="t mono" style="left:597.38px;top:264.71px;font-size:7.85px;letter-spacing:-.21px"><span style="color:#d4d4d4">"window"</span><span style="color:#d4d4d4">: </span><span style="color:#da70d6">{</span></div>
<svg class="a" style="left:575px;top:265.63px;" width="9" height="6" viewBox="0 0 9 6"><path d="M1 1L4.5 4.5L8 1" fill="none" stroke="#c5c5c5" stroke-width="1.1"/></svg>
<div class="t mono" style="left:555.00px;top:281.98px;font-size:7.85px;color:#505050;width:15px;text-align:right;">11</div>
<div class="t mono" style="left:606.86px;top:281.98px;font-size:7.85px;letter-spacing:-.21px"><span style="color:#9cdcfe">"navigationBarTextStyle"</span><span style="color:#d4d4d4">: </span><span style="color:#a8d8e8">"</span><span style="color:#e6837c">black</span><span style="color:#a8d8e8">"</span><span style="color:#d4d4d4">,</span></div>
<div class="t mono" style="left:555.00px;top:299.25px;font-size:7.85px;color:#505050;width:15px;text-align:right;">12</div>
<div class="t mono" style="left:606.86px;top:299.25px;font-size:7.85px;letter-spacing:-.21px"><span style="color:#9cdcfe">"navigationBarTitleText"</span><span style="color:#d4d4d4">: </span><span style="color:#a8d8e8">"</span><span style="color:#e6837c"><i class="cm">水</i><i class="cm">印</i></span><span style="color:#a8d8e8">"</span><span style="color:#d4d4d4">,</span></div>
<div class="a" style="left:589.5px;top:122px;width:0.8px;height:181px;background:#3e3e3e;"></div>
<div class="a" style="left:598.2px;top:139px;width:0.8px;height:95px;background:#3e3e3e;"></div>
<div class="a" style="left:598.2px;top:276px;width:0.8px;height:27px;background:#3e3e3e;"></div>
<div class="a" style="left:889.5px;top:103px;width:0.8px;height:200px;background:#3a3a3a;"></div>
<div class="a" style="left:893px;top:104px;width:4px;height:6px;background:#b8b8b8;"></div>
<div class="a" style="left:893px;top:222px;width:4px;height:6px;background:#c8c8c8;"></div>
<div class="a" style="left:537px;top:303px;width:363px;height:397px;background:#242424;"></div>
<div class="a" style="left:537px;top:303px;width:363px;height:22px;background:#2f2f2f;"></div>
<div class="a" style="left:537px;top:302.5px;width:363px;height:1px;background:#404040;"></div>
<div class="t " style="left:552.00px;top:312.06px;font-size:8.2px;color:#f0f0f0;;"><i class="c">调</i><i class="c">试</i><i class="c">器</i></div>
<div class="a" style="left:552px;top:323.8px;width:24.5px;height:1.6px;background:#d8d8d8;"></div>
<div class="a" style="left:582px;top:310.5px;width:19px;height:11.5px;background:#474747;border-radius:6px"></div>
<div class="t " style="left:585.30px;top:312.17px;font-size:8.3px;color:#d8d8d8;;">1, 3</div>
<div class="t " style="left:615.50px;top:312.06px;font-size:8.2px;color:#9a9a9a;;"><i class="c">问</i><i class="c">题</i></div>
<div class="t " style="left:646.40px;top:312.06px;font-size:8.2px;color:#9a9a9a;;"><i class="c">输</i><i class="c">出</i></div>
<div class="t " style="left:676.00px;top:312.06px;font-size:8.2px;color:#9a9a9a;;"><i class="c">终</i><i class="c">端</i></div>
<div class="t " style="left:706.00px;top:312.06px;font-size:8.2px;color:#9a9a9a;;"><i class="c">代</i><i class="c">码</i><i class="c">质</i><i class="c">量</i></div>
<svg class="a" style="left:852px;top:311px;" width="11" height="7" viewBox="0 0 11 7"><path d="M1 6L5.5 1.5L10 6" fill="none" stroke="#d0d0d0" stroke-width="1.2"/></svg>
<svg class="a" style="left:876px;top:311px;" width="9" height="9" viewBox="0 0 9 9"><path d="M1 1L8 8M8 1L1 8" stroke="#d0d0d0" stroke-width="1.2"/></svg>
<div class="a" style="left:537px;top:325px;width:363px;height:18px;background:#2c2c2c;"></div>
<div class="a" style="left:537px;top:342.5px;width:363px;height:0.8px;background:#3a3a3a;"></div>
<svg class="a" style="left:543px;top:328px;" width="13" height="13" viewBox="0 0 13 13"><path d="M6 11H1.5V1.5H11V5.5" fill="none" stroke="#9aa0a6" stroke-width="1.1"/><path d="M6.5 6.5L12 8.5L9.5 9.5L11.5 11.5L10.5 12.5L8.5 10.5L7.5 12Z" fill="#9aa0a6"/></svg>
<div class="a" style="left:562.5px;top:328px;width:0.8px;height:12px;background:#4a4c50;"></div>
<div class="t " style="left:576.00px;top:329.84px;font-size:9.4px;color:#e8eaed;;letter-spacing:-0.667px;">Wxml</div>
<div class="t " style="left:614.70px;top:329.84px;font-size:9.4px;color:#e8eaed;;letter-spacing:-0.500px;">Performance</div>
<div class="a" style="left:671px;top:325px;width:47.5px;height:18px;background:#000000;"></div>
<div class="t " style="left:679.50px;top:329.84px;font-size:9.4px;color:#f4f4f4;;letter-spacing:-0.417px;">Console</div>
<div class="t " style="left:724.50px;top:327.69px;font-size:11px;color:#bdc1c6;;">»</div>
<svg class="a" style="left:777.5px;top:329px;" width="9" height="9" viewBox="0 0 9 9"><circle cx="4.5" cy="4.5" r="4" fill="#e46962"/><path d="M2.8 2.8L6.2 6.2M6.2 2.8L2.8 6.2" stroke="#fff" stroke-width="1"/></svg>
<div class="t " style="left:788.20px;top:329.84px;font-size:9.4px;color:#e8eaed;;">1</div>
<svg class="a" style="left:796px;top:328.5px;" width="10" height="9" viewBox="0 0 10 9"><path d="M5 0.5L9.7 8.5H0.3Z" fill="#f2c94c"/><path d="M5 3V5.8M5 6.6V7.6" stroke="#333" stroke-width=".9"/></svg>
<div class="t " style="left:806.80px;top:329.84px;font-size:9.4px;color:#e8eaed;;">3</div>
<svg class="a" style="left:815.5px;top:329.5px;" width="8" height="7" viewBox="0 0 8 7"><path d="M0.5 0.5H7.5V5.5H2.5L0.5 7Z" fill="#5b9cf5"/></svg>
<div class="t " style="left:824.50px;top:329.84px;font-size:9.4px;color:#e8eaed;;">2</div>
<div class="a" style="left:834.5px;top:328px;width:0.8px;height:12px;background:#4a4c50;"></div>
<svg class="a" style="left:843px;top:328px;" width="12" height="12" viewBox="0 0 12 12"><g transform="scale(1.0)"><circle cx="6" cy="6" r="3.6" fill="none" stroke="#9aa0a6" stroke-width="2.2" stroke-dasharray="1.6 1.23"/><circle cx="6" cy="6" r="3" fill="none" stroke="#9aa0a6" stroke-width="1.5"/><circle cx="6" cy="6" r="1.3" fill="#2c2c2c"/></g></svg>
<svg class="a" style="left:866px;top:328px;" width="4" height="13" viewBox="0 0 4 13"><circle cx="2" cy="2.5" r="1" fill="#9aa0a6"/><circle cx="2" cy="6.5" r="1" fill="#9aa0a6"/><circle cx="2" cy="10.5" r="1" fill="#9aa0a6"/></svg>
<svg class="a" style="left:881px;top:328px;" width="15" height="12" viewBox="0 0 15 12"><rect x="4.5" y="1" width="10" height="7.5" fill="none" stroke="#9aa0a6" stroke-width="1.1"/><path d="M4.5 4H1.5V11H11V8.5" fill="none" stroke="#9aa0a6" stroke-width="1.1"/></svg>
<div class="a" style="left:537px;top:343.3px;width:363px;height:19px;background:#2c2c2c;"></div>
<div class="a" style="left:537px;top:362px;width:363px;height:0.8px;background:#404040;"></div>
<svg class="a" style="left:543px;top:347px;" width="13" height="12" viewBox="0 0 13 12"><rect x="1" y="1" width="11" height="10" fill="none" stroke="#9aa0a6" stroke-width="1.1"/><path d="M3.8 1V11" stroke="#9aa0a6" stroke-width="1.1"/><path d="M6 3.5L9.5 6L6 8.5Z" fill="#9aa0a6"/></svg>
<svg class="a" style="left:564px;top:346.5px;" width="12" height="12" viewBox="0 0 12 12"><circle cx="6" cy="6" r="4.6" fill="none" stroke="#9aa0a6" stroke-width="1.2"/><path d="M2.8 2.8L9.2 9.2" stroke="#9aa0a6" stroke-width="1.2"/></svg>
<div class="a" style="left:583px;top:346px;width:0.8px;height:13px;background:#4a4c50;"></div>
<div class="t " style="left:589.00px;top:348.84px;font-size:9.4px;color:#e8eaed;;letter-spacing:-0.333px;">appservice</div>
<svg class="a" style="left:676px;top:350px;" width="7" height="6" viewBox="0 0 7 6"><path d="M0.5 0.5H6.5L3.5 5.5Z" fill="#9aa0a6"/></svg>
<div class="a" style="left:688px;top:346px;width:0.8px;height:13px;background:#4a4c50;"></div>
<svg class="a" style="left:695px;top:348px;" width="14" height="9" viewBox="0 0 14 9"><path d="M1 4.5Q7 -1 13 4.5Q7 10 1 4.5Z" fill="none" stroke="#9aa0a6" stroke-width="1.1"/><circle cx="7" cy="4.5" r="1.9" fill="#9aa0a6"/></svg>
<div class="a" style="left:716px;top:346px;width:0.8px;height:13px;background:#4a4c50;"></div>
<div class="a" style="left:720px;top:345.8px;width:37.4px;height:14.2px;background:#202124;border:1px solid #45474a"></div>
<div class="t " style="left:724.00px;top:348.84px;font-size:9.4px;color:#9aa0a6;;">Filter</div>
<div class="t " style="left:763.90px;top:348.84px;font-size:9.4px;color:#bdc1c6;;letter-spacing:-0.423px;">Default levels</div>
<svg class="a" style="left:820px;top:350px;" width="7" height="6" viewBox="0 0 7 6"><path d="M0.5 0.5H6.5L3.5 5.5Z" fill="#9aa0a6"/></svg>
<div class="a" style="left:833px;top:346px;width:0.8px;height:13px;background:#4a4c50;"></div>
<div class="t " style="left:840.90px;top:348.84px;font-size:9.4px;color:#9aa0a6;;letter-spacing:-0.143px;">1 hidden</div>
<svg class="a" style="left:884px;top:347px;" width="12" height="12" viewBox="0 0 12 12"><g transform="scale(1.0)"><circle cx="6" cy="6" r="3.6" fill="none" stroke="#9aa0a6" stroke-width="2.2" stroke-dasharray="1.6 1.23"/><circle cx="6" cy="6" r="3" fill="none" stroke="#9aa0a6" stroke-width="1.5"/><circle cx="6" cy="6" r="1.3" fill="#2c2c2c"/></g></svg>
<svg class="a" style="left:543px;top:368.5px;" width="8" height="7" viewBox="0 0 8 7"><path d="M0.5 0.5H7.5V5.5H2.5L0.5 7Z" fill="#5b9cf5"/></svg>
<div class="t mono" style="left:555.10px;top:368.88px;font-size:7.85px;letter-spacing:-.21px;color:#e8eaed;">Some messages have been moved to the Issues panel.</div>
<div class="t mono" style="left:826.86px;top:368.88px;font-size:7.85px;letter-spacing:-.21px;color:#d5d5d5;text-decoration:underline;text-underline-offset:1.5px">View issues</div>
<div class="a" style="left:537px;top:379.8px;width:363px;height:0.8px;background:#3a3a3a;"></div>
<div class="a" style="left:537px;top:380.5px;width:363px;height:14.5px;background:#342d02;"></div>
<div class="a" style="left:537px;top:380.5px;width:363px;height:0.8px;background:#5a5122;"></div>
<div class="a" style="left:537px;top:394.2px;width:363px;height:0.8px;background:#5a5122;"></div>
<svg class="a" style="left:542.5px;top:383.8px;" width="9" height="8" viewBox="0 0 9 8"><path d="M4.5 0.3L8.8 7.7H0.2Z" fill="#f2c94c"/><path d="M4.5 2.8V5.2M4.5 6V7" stroke="#332b00" stroke-width=".9"/></svg>
<div class="t mono" style="left:555.10px;top:383.88px;font-size:7.85px;letter-spacing:-.21px;color:#f2dfa8;">[<i class="cm">自</i><i class="cm">动</i><i class="cm">热</i><i class="cm">重</i><i class="cm">载</i>] <i class="cm">已</i><i class="cm">开</i><i class="cm">启</i><i class="cm">代</i><i class="cm">码</i><i class="cm">文</i><i class="cm">件</i><i class="cm">保</i><i class="cm">存</i><i class="cm">后</i><i class="cm">自</i><i class="cm">动</i><i class="cm">热</i><i class="cm">重</i><i class="cm">载</i><i class="cm">（</i><i class="cm">不</i><i class="cm">支</i><i class="cm">持</i> json<i class="cm">）</i></div>
<div class="t mono" style="left:555.10px;top:399.28px;font-size:7.85px;letter-spacing:-.21px;color:#e8eaed;">[system] Subpackages: N/A</div>
<div class="t mono" style="left:788.94px;top:399.28px;font-size:7.85px;letter-spacing:-.21px;color:#d5d5d5;text-decoration:underline;text-underline-offset:1.5px">VM71 WAService.js:1</div>
<div class="a" style="left:537px;top:410.0px;width:363px;height:0.7px;background:#333;"></div>
<div class="t mono" style="left:555.10px;top:413.28px;font-size:7.85px;letter-spacing:-.21px;color:#e8eaed;">[system] LazyCodeLoading: false</div>
<div class="t mono" style="left:788.94px;top:413.28px;font-size:7.85px;letter-spacing:-.21px;color:#d5d5d5;text-decoration:underline;text-underline-offset:1.5px">VM71 WAService.js:1</div>
<div class="a" style="left:537px;top:424.0px;width:363px;height:0.7px;background:#333;"></div>
<div class="a" style="left:537px;top:423.8px;width:363px;height:24.4px;background:#290000;"></div>
<div class="a" style="left:537px;top:423.8px;width:363px;height:0.8px;background:#5c0000;"></div>
<div class="a" style="left:537px;top:447.6px;width:363px;height:0.8px;background:#5c0000;"></div>
<svg class="a" style="left:541.5px;top:427px;" width="10" height="10" viewBox="0 0 10 10"><circle cx="5" cy="5" r="4.3" fill="#e46962"/><path d="M3.2 3.2L6.8 6.8M6.8 3.2L3.2 6.8" stroke="#290000" stroke-width="1"/></svg>
<svg class="a" style="left:556px;top:429px;" width="5" height="6" viewBox="0 0 5 6"><path d="M0.5 0.5L4 3L0.5 5.5Z" fill="#9aa0a6"/></svg>
<div class="t mono" style="left:561.50px;top:427.68px;font-size:7.85px;letter-spacing:-.21px;color:#ff8080;">Unhandled promise rejection</div>
<div class="t mono" style="left:555.10px;top:437.98px;font-size:7.85px;letter-spacing:-.21px;color:#ff8080;">(env: Windows,mp,1.05.2204180; lib: 2.26.2)</div>
<div class="t mono" style="left:788.94px;top:427.68px;font-size:7.85px;letter-spacing:-.21px;color:#e0b0b0;text-decoration:underline;text-underline-offset:1.5px">VM71 WAService.js:1</div>
<div class="t mono" style="left:555.10px;top:452.18px;font-size:7.85px;letter-spacing:-.21px;color:#e8eaed;">[system] WeChatLib: 2.26.2 (2022.9.29 16:05:22)</div>
<div class="t mono" style="left:784.20px;top:452.18px;font-size:7.85px;letter-spacing:-.21px;color:#d5d5d5;text-decoration:underline;text-underline-offset:1.5px">VM136 WAService.js:1</div>
<div class="a" style="left:537px;top:462.90000000000003px;width:363px;height:0.7px;background:#333;"></div>
<div class="t mono" style="left:555.10px;top:466.58px;font-size:7.85px;letter-spacing:-.21px;color:#e8eaed;">[system] Launch Time: 251 ms</div>
<div class="t mono" style="left:788.94px;top:466.58px;font-size:7.85px;letter-spacing:-.21px;color:#d5d5d5;text-decoration:underline;text-underline-offset:1.5px">VM71 WAService.js:1</div>
<div class="a" style="left:537px;top:477.3px;width:363px;height:0.7px;background:#333;"></div>
<div class="a" style="left:537px;top:477.3px;width:363px;height:14.399999999999977px;background:#342d02;"></div>
<div class="a" style="left:537px;top:477.3px;width:363px;height:0.8px;background:#5a5122;"></div>
<div class="a" style="left:537px;top:490.9px;width:363px;height:0.8px;background:#5a5122;"></div>
<svg class="a" style="left:542.5px;top:480.5px;" width="9" height="8" viewBox="0 0 9 8"><path d="M4.5 0.3L8.8 7.7H0.2Z" fill="#f2c94c"/><path d="M4.5 2.8V5.2M4.5 6V7" stroke="#332b00" stroke-width=".9"/></svg>
<div class="t mono" style="left:555.10px;top:480.58px;font-size:7.85px;letter-spacing:-.21px;color:#f2dfa8;">[<i class="cm">自</i><i class="cm">动</i><i class="cm">热</i><i class="cm">重</i><i class="cm">载</i>] <i class="cm">已</i><i class="cm">开</i><i class="cm">启</i><i class="cm">代</i><i class="cm">码</i><i class="cm">文</i><i class="cm">件</i><i class="cm">保</i><i class="cm">存</i><i class="cm">后</i><i class="cm">自</i><i class="cm">动</i><i class="cm">热</i><i class="cm">重</i><i class="cm">载</i><i class="cm">（</i><i class="cm">不</i><i class="cm">支</i><i class="cm">持</i> json<i class="cm">）</i></div>
<svg class="a" style="left:556px;top:497px;" width="5" height="6" viewBox="0 0 5 6"><path d="M0.5 0.5L4 3L0.5 5.5Z" fill="#9aa0a6"/></svg>
<div class="t mono" style="left:562.5px;top:496.38px;font-size:7.85px;letter-spacing:-.21px;font-style:italic;color:#e8eaed">{errMsg: <span style="color:#f28b54">"chooseImage:fail cancel"</span>}</div>
<div class="t mono" style="left:760.50px;top:496.38px;font-size:7.85px;letter-spacing:-.21px;color:#d5d5d5;text-decoration:underline;text-underline-offset:1.5px">choose-image.js? [sm]:200</div>
<div class="a" style="left:537px;top:507.5px;width:363px;height:13.5px;background:#342d02;"></div>
<div class="a" style="left:537px;top:507.5px;width:363px;height:0.8px;background:#5a5122;"></div>
<div class="a" style="left:537px;top:520.2px;width:363px;height:0.8px;background:#5a5122;"></div>
<svg class="a" style="left:542.5px;top:510.29999999999995px;" width="9" height="8" viewBox="0 0 9 8"><path d="M4.5 0.3L8.8 7.7H0.2Z" fill="#f2c94c"/><path d="M4.5 2.8V5.2M4.5 6V7" stroke="#332b00" stroke-width=".9"/></svg>
<div class="t mono" style="left:555.10px;top:510.38px;font-size:7.85px;letter-spacing:-.21px;color:#f2dfa8;">[<i class="cm">自</i><i class="cm">动</i><i class="cm">热</i><i class="cm">重</i><i class="cm">载</i>] <i class="cm">已</i><i class="cm">开</i><i class="cm">启</i><i class="cm">代</i><i class="cm">码</i><i class="cm">文</i><i class="cm">件</i><i class="cm">保</i><i class="cm">存</i><i class="cm">后</i><i class="cm">自</i><i class="cm">动</i><i class="cm">热</i><i class="cm">重</i><i class="cm">载</i><i class="cm">（</i><i class="cm">不</i><i class="cm">支</i><i class="cm">持</i> json<i class="cm">）</i></div>
<svg class="a" style="left:542px;top:523px;" width="6" height="8" viewBox="0 0 6 8"><path d="M1 1L4.5 4L1 7" fill="none" stroke="#8ab4f8" stroke-width="1.3"/></svg>
</body></html>
